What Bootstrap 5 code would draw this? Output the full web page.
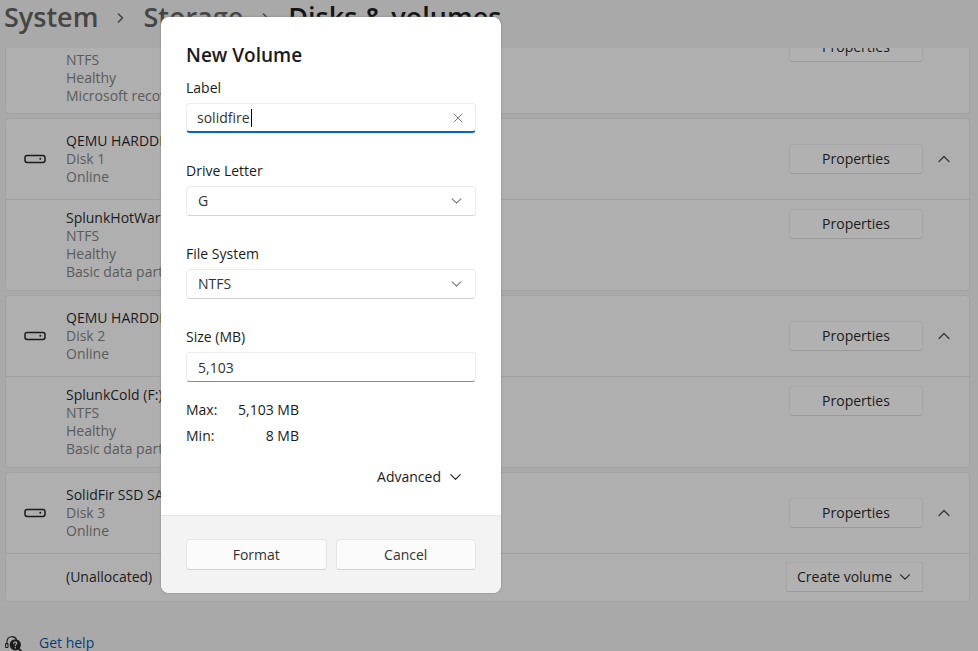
<!DOCTYPE html>
<html lang="en">
<head>
<meta charset="utf-8">
<meta name="viewport" content="width=device-width, initial-scale=1">
<title>Disks &amp; volumes</title>
<link href="https://cdn.jsdelivr.net/npm/bootstrap@5.3.0/dist/css/bootstrap.min.css" rel="stylesheet">
<style>
  body { font: 14px/18px "Open Sans", "Noto Sans", sans-serif; background: #a9a9a9; color: #1b1b1b; }
  .crumbs { height: 48px; font-size: 27px; line-height: 34px; font-weight: 600; color: #454545; gap: 18px; }
  .crumbs a { color: inherit; }
  .crumbs .here { color: #141414; }
  .disks { padding: 0 8px 0 5px; gap: 4px; }
  .panel { background: #afafaf; border: 1px solid #a2a2a2; border-radius: 4px; overflow: hidden; }
  .panel-cut { border-top: 0; border-radius: 0 0 4px 4px; }
  .sub { color: #5b5b5b; }
  .disk { height: 80px; padding: 0 17px 0 18px; }
  .disk-text { margin-left: 20px; }
  .vol { border-top: 1px solid #a0a0a0; padding: 9px 46px 9px 60px; }
  .panel-cut .vol { border-top: 0; padding: 3px 46px 8px 60px; }
  .panel-cut .btn-win { margin-top: -19px; }
  .btn-win { --bs-btn-padding-y: 0; --bs-btn-padding-x: 0; --bs-btn-font-size: 14px; --bs-btn-border-radius: 4px;
    --bs-btn-color: #1b1b1b; --bs-btn-bg: #b1b1b1; --bs-btn-border-color: #a7a7a7;
    --bs-btn-hover-bg: #adadad; --bs-btn-hover-border-color: #a2a2a2;
    width: 134px; height: 30px; line-height: 18px; border-bottom-color: #9b9b9b; }
  .btn-create { --bs-btn-border-radius: 0; width: 137px; gap: 6px; }
  .toggle { width: 16px; height: 16px; margin-left: 13px; color: #333; }
  .vol-free { padding-top: 8px; padding-bottom: 9px; }
  .help { padding: 32px 5px 0; gap: 17px; }
  .help a { color: #0b3c77; }
  .dialog-box { position: absolute; top: 17px; left: 161px; width: 340px; background: #fff; border-radius: 8px;
    overflow: hidden; box-shadow: 0 0 2px #777; }
  .dialog-main { padding: 26px 25px 23px; }
  .dialog-main h1 { font-size: 19px; line-height: 24px; font-weight: 600; margin: 0 0 12px; }
  .field { margin-bottom: 29px; }
  .field label { display: block; margin-bottom: 6px; }
  .field .form-control, .field .form-select { height: 30px; padding: 0 11px; font-size: 14px; line-height: 18px; color: #333;
    border: 1px solid #ececec; border-bottom-color: #d2d2d2; border-radius: 4px; background-color: #fff; box-shadow: none; }
  .field .form-select { background-image: none; appearance: none; }
  .field .form-control.active-input { padding-left: 10px; padding-right: 36px; border-bottom: 2px solid #0067c0; }
  .field .form-control.size-input { border-bottom-color: #8a8a8a; }
  .field.field-last { margin-bottom: 19px; }
  .over { position: absolute; top: 0; right: 12px; height: 30px; color: #777; }
  .caret { position: absolute; top: 6px; left: 65px; width: 1px; height: 18px; background: #000; }
  .limits { row-gap: 8px; }
  .limits dt { width: 40px; }
  .limits dd { width: 73px; }
  .advanced { height: 30px; margin: 17px 13px 0 0; gap: 7px; color: #1b1b1b; }
  .dialog-actions { background: #f3f3f3; border-top: 1px solid #e5e5e5; padding: 23px 25px; gap: 9px; }
  .dialog-actions .btn-win { --bs-btn-bg: #fbfbfb; --bs-btn-border-color: #e5e5e5; --bs-btn-color: #333; height: 31px; border-bottom-color: #d0d0d0; }
  svg { display: block; fill: none; stroke: currentColor; stroke-linecap: round; stroke-linejoin: round; }
</style>
<script src="https://cdn.jsdelivr.net/npm/bootstrap@5.3.0/dist/js/bootstrap.bundle.min.js"></script>
</head>
<body>
<svg class="d-none">
  <symbol id="drive" viewBox="0 0 22 10"><rect x="1" y="1.500" width="20" height="7" rx="2.200" stroke-width="1.500"/><circle cx="16.300" cy="4.700" r="1" fill="currentColor" stroke="none"/></symbol>
  <symbol id="up" viewBox="0 0 16 16"><path d="M3 10.500 8 5.500l5 5" stroke-width="1.200"/></symbol>
  <symbol id="down" viewBox="0 0 16 16"><path d="M3 5.500l5 5 5-5" stroke-width="1.200"/></symbol>
</svg>

<nav class="crumbs d-flex align-items-start text-nowrap ps-1" aria-label="Breadcrumb">
  <a class="text-decoration-none" href="#">System</a>
  <svg width="9" height="36" viewBox="0 0 9 36"><path d="M2.500 14l4 4-4 4" stroke-width="1.600"/></svg>
  <a class="text-decoration-none" href="#">Storage</a>
  <svg width="9" height="36" viewBox="0 0 9 36"><path d="M2.500 14l4 4-4 4" stroke-width="1.600"/></svg>
  <span class="here" aria-current="page">Disks &amp; volumes</span>
</nav>

<main class="disks d-flex flex-column">
  <section class="panel panel-cut">
    <div class="vol d-flex justify-content-between align-items-start">
      <div class="sub">NTFS<br>Healthy<br>Microsoft recovery partition</div>
      <button class="btn btn-win" type="button">Properties</button>
    </div>
  </section>

  <section class="panel">
    <div class="disk d-flex align-items-center">
      <svg width="22" height="10"><use href="#drive"/></svg>
      <div class="disk-text flex-grow-1">QEMU HARDDISK<div class="sub">Disk 1<br>Online</div></div>
      <button class="btn btn-win" type="button">Properties</button>
      <button class="toggle btn border-0 p-0" type="button" aria-label="Collapse Disk 1"><svg width="16" height="16"><use href="#up"/></svg></button>
    </div>
    <div class="vol d-flex justify-content-between align-items-start">
      <div>SplunkHotWarm<div class="sub">NTFS<br>Healthy<br>Basic data partition</div></div>
      <button class="btn btn-win" type="button">Properties</button>
    </div>
  </section>

  <section class="panel">
    <div class="disk d-flex align-items-center">
      <svg width="22" height="10"><use href="#drive"/></svg>
      <div class="disk-text flex-grow-1">QEMU HARDDISK<div class="sub">Disk 2<br>Online</div></div>
      <button class="btn btn-win" type="button">Properties</button>
      <button class="toggle btn border-0 p-0" type="button" aria-label="Collapse Disk 2"><svg width="16" height="16"><use href="#up"/></svg></button>
    </div>
    <div class="vol d-flex justify-content-between align-items-start">
      <div>SplunkCold (F:)<div class="sub">NTFS<br>Healthy<br>Basic data partition</div></div>
      <button class="btn btn-win" type="button">Properties</button>
    </div>
  </section>

  <section class="panel">
    <div class="disk d-flex align-items-center">
      <svg width="22" height="10"><use href="#drive"/></svg>
      <div class="disk-text flex-grow-1">SolidFir SSD SAN<div class="sub">Disk 3<br>Online</div></div>
      <button class="btn btn-win" type="button">Properties</button>
      <button class="toggle btn border-0 p-0" type="button" aria-label="Collapse Disk 3"><svg width="16" height="16"><use href="#up"/></svg></button>
    </div>
    <div class="vol vol-free d-flex justify-content-between align-items-center">
      <div>(Unallocated)</div>
      <button class="btn btn-win btn-create d-flex align-items-center justify-content-center" type="button">Create volume <svg width="14" height="14"><use href="#down"/></svg></button>
    </div>
  </section>
</main>

<footer class="help d-flex align-items-center">
  <svg width="17" height="17" viewBox="0 0 17 17"><path d="M2 9V6.500a5 5 0 0 1 9.500-2" stroke-width="1.100"/><path d="M1 8.500h2v4H1z" stroke-width="1"/><circle cx="10.300" cy="9.800" r="5.600" fill="currentColor" stroke="none"/><path d="M13.500 13.500l2.500 2.500" stroke-width="1.800"/><path d="M8.800 8.400c0-2 3-2 3-.2 0 1.200-1.500 1.200-1.500 2.500" stroke="#a9a9a9" stroke-width="1.200"/><circle cx="10.300" cy="12.700" r=".8" fill="#a9a9a9" stroke="none"/></svg>
  <a class="text-decoration-none" href="#">Get help</a>
</footer>

<form class="dialog-box" role="dialog" aria-labelledby="dlg-title">
  <div class="dialog-main">
    <h1 id="dlg-title">New Volume</h1>
    <div class="field">
      <label for="vol-label">Label</label>
      <div class="position-relative">
        <input class="form-control active-input" id="vol-label" type="text" value="solidfire">
        <span class="caret"></span>
        <button class="over btn border-0 p-0" type="button" aria-label="Clear"><svg width="12" height="12" viewBox="0 0 12 12"><path d="M2 2l8 8M10 2l-8 8"/></svg></button>
      </div>
    </div>
    <div class="field">
      <label for="vol-letter">Drive Letter</label>
      <div class="position-relative">
        <select class="form-select" id="vol-letter"><option>G</option></select>
        <span class="over d-flex align-items-center pe-none"><svg width="15" height="14"><use href="#down"/></svg></span>
      </div>
    </div>
    <div class="field">
      <label for="vol-fs">File System</label>
      <div class="position-relative">
        <select class="form-select" id="vol-fs"><option>NTFS</option></select>
        <span class="over d-flex align-items-center pe-none"><svg width="15" height="14"><use href="#down"/></svg></span>
      </div>
    </div>
    <div class="field field-last">
      <label for="vol-size">Size (MB)</label>
      <input class="form-control size-input" id="vol-size" type="text" value="5,103">
    </div>
    <dl class="limits d-flex flex-column mb-0">
      <div class="d-flex"><dt class="fw-normal">Max:</dt><dd class="mb-0 text-end">5,103 MB</dd></div>
      <div class="d-flex"><dt class="fw-normal">Min:</dt><dd class="mb-0 text-end">8 MB</dd></div>
    </dl>
    <div class="d-flex justify-content-end">
      <button class="advanced bg-transparent border-0 p-0 d-flex align-items-center" type="button">Advanced <svg width="15" height="16"><use href="#down"/></svg></button>
    </div>
  </div>
  <div class="dialog-actions d-flex">
    <button class="btn btn-win flex-fill w-50" type="button">Format</button>
    <button class="btn btn-win flex-fill w-50" type="button">Cancel</button>
  </div>
</form>
</body>
</html>
